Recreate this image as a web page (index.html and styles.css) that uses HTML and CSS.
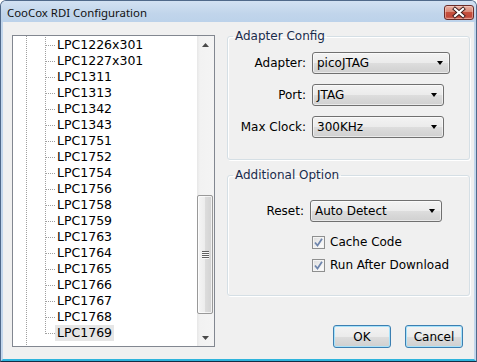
FILE: index.html
```html
<!DOCTYPE html>
<html>
<head>
<meta charset="utf-8">
<title>CooCox RDI Configuration</title>
<link rel="stylesheet" href="styles.css">
</head>
<body>
<div class="window">
  <div class="titlebar">
    <span class="title">CooCox RDI Configuration</span>
    <span class="close">
      <svg width="28" height="13" viewBox="0 0 28 13">
        <path d="M10 3 L18 10 M18 3 L10 10" stroke="#3b1a1a" stroke-width="4" stroke-linecap="square" fill="none"/>
        <path d="M10 3 L18 10 M18 3 L10 10" stroke="#ffffff" stroke-width="2.2" stroke-linecap="square" fill="none"/>
      </svg>
    </span>
  </div>
  <div class="frame">
    <div class="tree">
      <div class="tree-items">
        <div class="node"><span class="conn"></span><span class="label">LPC1226x301</span></div>
        <div class="node"><span class="conn"></span><span class="label">LPC1227x301</span></div>
        <div class="node"><span class="conn"></span><span class="label">LPC1311</span></div>
        <div class="node"><span class="conn"></span><span class="label">LPC1313</span></div>
        <div class="node"><span class="conn"></span><span class="label">LPC1342</span></div>
        <div class="node"><span class="conn"></span><span class="label">LPC1343</span></div>
        <div class="node"><span class="conn"></span><span class="label">LPC1751</span></div>
        <div class="node"><span class="conn"></span><span class="label">LPC1752</span></div>
        <div class="node"><span class="conn"></span><span class="label">LPC1754</span></div>
        <div class="node"><span class="conn"></span><span class="label">LPC1756</span></div>
        <div class="node"><span class="conn"></span><span class="label">LPC1758</span></div>
        <div class="node"><span class="conn"></span><span class="label">LPC1759</span></div>
        <div class="node"><span class="conn"></span><span class="label">LPC1763</span></div>
        <div class="node"><span class="conn"></span><span class="label">LPC1764</span></div>
        <div class="node"><span class="conn"></span><span class="label">LPC1765</span></div>
        <div class="node"><span class="conn"></span><span class="label">LPC1766</span></div>
        <div class="node"><span class="conn"></span><span class="label">LPC1767</span></div>
        <div class="node"><span class="conn"></span><span class="label">LPC1768</span></div>
        <div class="node node-last"><span class="conn"></span><span class="label label-selected">LPC1769</span></div>
      </div>
      <div class="vscroll">
        <div class="sb-arrow">
          <svg width="7" height="4" viewBox="0 0 7 4"><path d="M3.5 0 L7 4 L0 4 Z" fill="#4a4a4a"/></svg>
        </div>
        <div class="sb-track">
          <div class="sb-thumb">
            <svg width="7" height="8" viewBox="0 0 7 8">
              <path d="M0 0.5 H7 M0 2.5 H7 M0 4.5 H7 M0 6.5 H7" stroke="#606060" stroke-width="1"/>
              <path d="M0 1.5 H7 M0 3.5 H7 M0 5.5 H7 M0 7.5 H7" stroke="#fafafa" stroke-width="1"/>
            </svg>
          </div>
        </div>
        <div class="sb-arrow">
          <svg width="7" height="4" viewBox="0 0 7 4"><path d="M0 0 L7 0 L3.5 4 Z" fill="#4a4a4a"/></svg>
        </div>
      </div>
    </div>

    <div class="side">
      <fieldset class="group group-adapter">
        <legend class="group-title">Adapter Config</legend>
        <div class="rows">
          <div class="field">
            <span class="field-label">Adapter:</span>
            <span class="combo combo-wide"><span>picoJTAG</span><span class="combo-arrow"></span></span>
          </div>
          <div class="field">
            <span class="field-label">Port:</span>
            <span class="combo"><span>JTAG</span><span class="combo-arrow"></span></span>
          </div>
          <div class="field">
            <span class="field-label">Max Clock:</span>
            <span class="combo"><span>300KHz</span><span class="combo-arrow"></span></span>
          </div>
        </div>
      </fieldset>

      <fieldset class="group group-option">
        <legend class="group-title">Additional Option</legend>
        <div class="rows rows-option">
          <div class="field">
            <span class="field-label field-label-narrow">Reset:</span>
            <span class="combo"><span>Auto Detect</span><span class="combo-arrow"></span></span>
          </div>
          <div class="checks">
            <label class="check"><span class="check-box"><svg width="11" height="11" viewBox="0 0 11 11"><path d="M2 5.5 L4.5 8.5 L9 1.8" stroke="#6f86ad" stroke-width="1.8" fill="none"/></svg></span>Cache Code</label>
            <label class="check"><span class="check-box"><svg width="11" height="11" viewBox="0 0 11 11"><path d="M2 5.5 L4.5 8.5 L9 1.8" stroke="#6f86ad" stroke-width="1.8" fill="none"/></svg></span>Run After Download</label>
          </div>
        </div>
      </fieldset>

      <div class="buttons">
        <button class="btn">OK</button>
        <button class="btn">Cancel</button>
      </div>
    </div>
  </div>
</div>
</body>
</html>
```
FILE: styles.css
```css
* { box-sizing: border-box; }

html, body {
  margin: 0;
  padding: 0;
}

body {
  width: 477px;
  height: 362px;
  overflow: hidden;
  background: #ffffff;
  font-family: "DejaVu Sans", Verdana, sans-serif;
  font-size: 12px;
  color: #000;
}

.window {
  width: 477px;
  height: 362px;
  display: flex;
  flex-direction: column;
  border: 1px solid #50698a;
  border-bottom-color: #142c44;
  border-radius: 6px 6px 0 0;
  background: #c2d6ec;
  overflow: hidden;
}

.titlebar {
  height: 21px;
  flex: none;
  display: flex;
  align-items: flex-start;
  justify-content: space-between;
  padding: 0 2px 0 6px;
  background: linear-gradient(#d2e1f2, #c1d5eb 60%, #bcd2ea);
}

.title {
  font-family: "Noto Sans", "Open Sans", sans-serif;
  font-size: 11.4px;
  line-height: 21px;
  padding-top: 1px;
  color: #111;
}

.close {
  margin-top: 4px;
  width: 30px;
  height: 15px;
  display: flex;
  align-items: center;
  justify-content: center;
  border: 1px solid #6a2c28;
  border-radius: 3px;
  background: linear-gradient(#eab0a2, #d98a78 45%, #c5503d 50%, #c0483a 80%, #d36e5e);
  box-shadow: inset 0 0 0 1px rgba(255, 220, 210, 0.45);
}

.frame {
  flex: 1;
  display: flex;
  align-items: flex-start;
  gap: 12px;
  padding: 0 4px 0 9px;
  border: 2px solid #c2d6ec;
  border-top: 0;
  border-bottom: 2px solid #2eb4dc;
  background: #f0f0f0;
}

/* tree */
.tree {
  margin-top: 13px;
  width: 203px;
  height: 312px;
  flex: none;
  display: flex;
  border: 1px solid #828790;
  background: #ffffff;
}

.tree-items {
  flex: 1;
  padding-top: 1px;
  overflow: hidden;
  font-size: 12.5px;
  background-image: repeating-linear-gradient(to bottom, #a0a0a0 0 1px, transparent 1px 2px);
  background-size: 1px 100%;
  background-position: 13px 0;
  background-repeat: no-repeat;
}

.node {
  height: 16px;
  display: flex;
  align-items: center;
  padding-left: 32px;
}

.conn {
  width: 10px;
  height: 16px;
  flex: none;
  background-image:
    repeating-linear-gradient(to bottom, #a0a0a0 0 1px, transparent 1px 2px),
    repeating-linear-gradient(to right, transparent 0 1px, #a0a0a0 1px 2px);
  background-size: 1px 16px, 10px 1px;
  background-position: 0 0, 0 8px;
  background-repeat: no-repeat;
}

.node-last .conn {
  background-size: 1px 9px, 10px 1px;
}

.label {
  line-height: 16px;
  padding: 0 2px;
  color: #000;
}

.label-selected {
  background: #e6e6e6;
}

.vscroll {
  width: 17px;
  flex: none;
  display: flex;
  flex-direction: column;
  background: linear-gradient(to right, #e7e7e7, #f2f2f2 3px, #f4f4f4);
}

.sb-arrow {
  height: 17px;
  flex: none;
  display: flex;
  align-items: center;
  justify-content: center;
}

.sb-track {
  flex: 1;
}

.sb-thumb {
  margin: 142px 1px 0 0;
  height: 119px;
  display: flex;
  align-items: center;
  justify-content: center;
  border: 1px solid #999999;
  border-radius: 2px;
  background: linear-gradient(to right, #f5f5f5, #ececec 50%, #dcdcdc 52%, #d2d2d2);
  box-shadow: inset 0 0 0 1px rgba(255, 255, 255, 0.7);
}

/* right side */
.side {
  width: 243px;
  flex: none;
  display: flex;
  flex-direction: column;
}

.group {
  margin: 0;
  padding: 0;
  border: 1px solid #d5dfe5;
  border-radius: 3px;
  box-shadow: inset 1px 1px 0 #ffffff, 1px 1px 0 #ffffff;
}

.group-adapter {
  margin-top: 7px;
  height: 131px;
}

.group-option {
  margin-top: 8px;
  height: 128px;
}

.group-title {
  margin-left: 5px;
  padding: 0 2px;
  line-height: 14px;
  font-size: 12px;
  color: #1a2c4c;
}

.rows {
  display: flex;
  flex-direction: column;
  gap: 10px;
  padding-top: 9px;
}

.rows-option {
  padding-top: 18px;
  gap: 12px;
}

.field {
  display: flex;
  align-items: center;
  gap: 6px;
  height: 22px;
}

.field-label {
  width: 78px;
  text-align: right;
  color: #000;
}

.field-label-narrow {
  width: 76px;
}

.combo {
  width: 132px;
  height: 22px;
  display: flex;
  align-items: center;
  justify-content: space-between;
  padding: 0 5px 0 4px;
  border: 1px solid #707070;
  border-radius: 3px;
  background: linear-gradient(#f3f3f3, #ebebeb 50%, #dddddd 51%, #d0d0d0);
  box-shadow: inset 0 0 0 1px rgba(255, 255, 255, 0.55);
  color: #000;
}

.combo-wide {
  width: 138px;
}

.combo-arrow {
  width: 0;
  height: 0;
  border-left: 3.5px solid transparent;
  border-right: 3.5px solid transparent;
  border-top: 4px solid #000;
  margin-right: 1px;
}

.checks {
  display: flex;
  flex-direction: column;
  gap: 7px;
  padding-left: 84px;
}

.check {
  display: flex;
  align-items: center;
  gap: 5px;
  height: 16px;
  color: #000;
}

.check-box {
  width: 13px;
  height: 13px;
  flex: none;
  display: flex;
  align-items: center;
  justify-content: center;
  border: 1px solid #8e8f8f;
  background: linear-gradient(135deg, #dcdcdc, #f6f6f6 70%, #ffffff);
  box-shadow: inset 0 0 0 1px #f4f4f4;
}

.buttons {
  display: flex;
  justify-content: flex-end;
  gap: 14px;
  margin-top: 29px;
  padding-right: 7px;
}

.btn {
  width: 58px;
  height: 23px;
  padding: 0;
  margin: 0;
  font-family: "DejaVu Sans", Verdana, sans-serif;
  font-size: 12px;
  color: #000;
  border: 1px solid #3c7fb1;
  border-radius: 3px;
  background: linear-gradient(#f3f3f3, #ebebeb 50%, #dddddd 51%, #cfcfcf);
  box-shadow: inset 0 0 0 1px #a6e2fb;
}
```
